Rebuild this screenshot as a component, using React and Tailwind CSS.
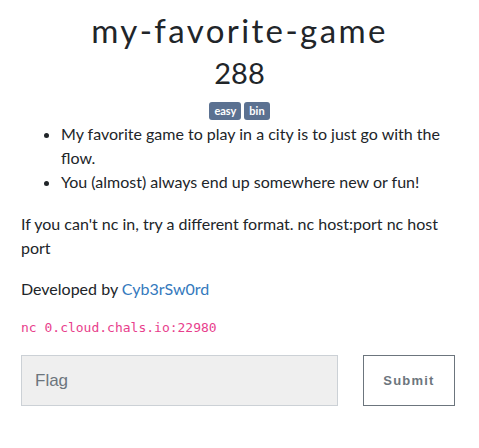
import React from "react";

export default function App() {
    return (
        <div className="w-[479px] h-[448px] bg-white text-[#212529] font-['Lato',sans-serif] px-[21px]">
            <h3 className="text-center text-[33px] leading-[38px] pt-[11px] tracking-[2.4px] font-['Lato',sans-serif] font-normal">my-favorite-game</h3>
            <h4 className="text-center text-[29px] leading-[36px] mt-[6px] font-['Lato',sans-serif]">288</h4>
            <div className="flex justify-center gap-[3px] mt-[11px]">
                <span className="bg-[#5b7191] text-white text-[11px] font-bold leading-[18px] px-[5px] rounded-[3px]">easy</span>
                <span className="bg-[#5b7191] text-white text-[11px] font-bold leading-[18px] px-[5px] rounded-[3px]">bin</span>
            </div>
            <ul className="list-disc pl-[40px] text-[16px] leading-[24px] mt-[2px]">
                <li>My favorite game to play in a city is to just go with the flow.</li>
                <li>You (almost) always end up somewhere new or fun!</li>
            </ul>
            <p className="text-[16px] leading-[24px] mt-[18px] pr-[20px]">If you can't nc in, try a different format. nc host:port nc host port</p>
            <p className="text-[16px] leading-[24px] mt-[17px]">
                Developed by <a className="text-[#3379bd]">Cyb3rSw0rd</a>
            </p>
            <p className="mt-[17px] text-[13px] leading-[20px] text-[#e83e8c] font-['DejaVu_Sans_Mono',monospace]">nc 0.cloud.chals.io:22980</p>
            <div className="flex mt-[17px] gap-[25px]">
                <div className="w-[317px] h-[51px] bg-[#efefef] border border-[#ccd1d6] flex items-center px-[13px] text-[17px] text-[#6c757d] font-['Liberation_Sans',sans-serif]">Flag</div>
                <button className="w-[92px] h-[51px] border border-[#6c757d] text-[#6c757d] text-[13px] font-bold tracking-[1.2px] font-['Liberation_Sans',sans-serif]">Submit</button>
            </div>
        </div>
    );
}
